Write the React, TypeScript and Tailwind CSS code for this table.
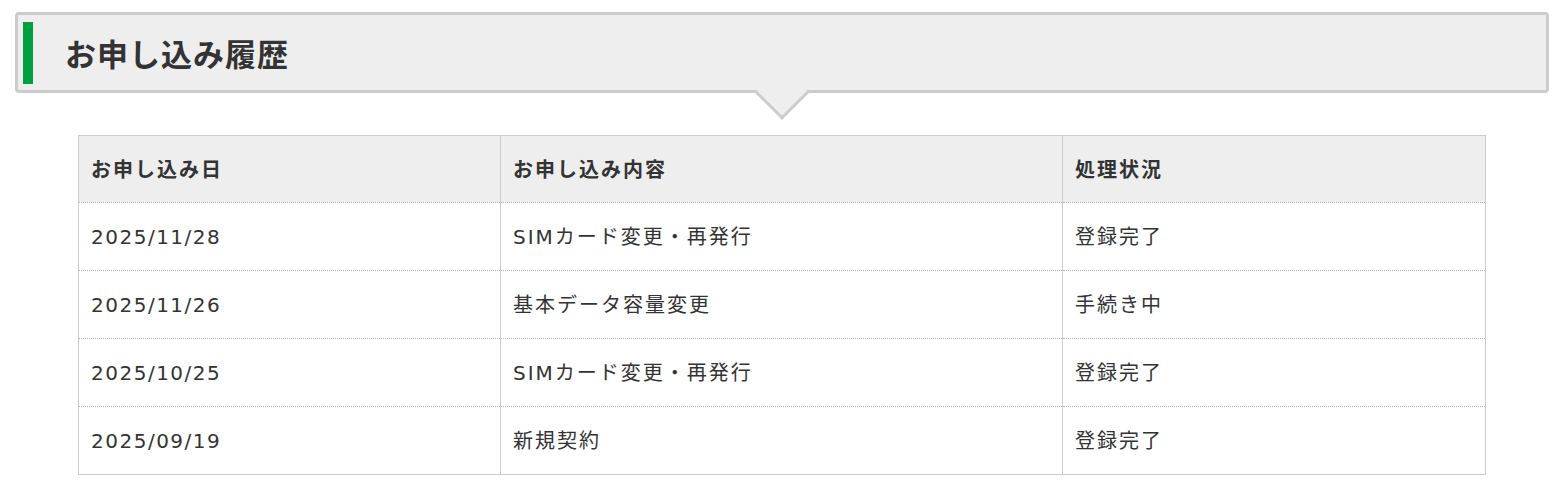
const rows = [
  { date: "2025/11/28", content: "SIMカード変更・再発行", status: "登録完了" },
  { date: "2025/11/26", content: "基本データ容量変更", status: "手続き中" },
  { date: "2025/10/25", content: "SIMカード変更・再発行", status: "登録完了" },
  { date: "2025/09/19", content: "新規契約", status: "登録完了" },
];

const jp = '"Noto Sans CJK JP", sans-serif';
const mixed = '"DejaVu Sans", "Noto Sans CJK JP", sans-serif';

export default function App() {
  return (
    <div className="w-[1566px] h-[490px] bg-white text-[#333] pt-[12px]" style={{ fontFamily: mixed }}>
      {/* heading */}
      <div className="relative ml-[15px] mr-[17px] h-[81px] rounded-[4px] border-[3px] border-[#cccccc] bg-[#eeeeee] flex items-center">
        <div className="ml-[5px] w-[10px] h-[62px] bg-[#00a040]" />
        <h2 className="ml-[32px] text-[31px] leading-none font-bold tracking-[1px]" style={{ fontFamily: jp }}>
          お申し込み履歴
        </h2>
        <div className="absolute left-1/2 -translate-x-1/2 bottom-[-22px] w-[38px] h-[38px] rotate-45 bg-[#eeeeee] border-r-[3px] border-b-[3px] border-[#cccccc]" />
      </div>

      {/* table */}
      <div className="ml-[78px] mr-[80px] mt-[42px]">
        <table className="w-full border-collapse border border-[#cccccc] text-[20px]">
          <thead>
            <tr className="h-[67px] bg-[#eeeeee]">
              <th
                className="w-[422px] text-left font-bold tracking-[2px] pl-[12px] border-r border-[#cccccc] border-b border-b-[#b5b5b5] border-dotted"
                style={{ fontFamily: jp, borderRightStyle: "solid" }}
              >
                お申し込み日
              </th>
              <th
                className="w-[562px] text-left font-bold tracking-[2px] pl-[12px] border-r border-[#cccccc] border-b border-b-[#b5b5b5] border-dotted"
                style={{ fontFamily: jp, borderRightStyle: "solid" }}
              >
                お申し込み内容
              </th>
              <th
                className="text-left font-bold tracking-[2px] pl-[12px] border-b border-b-[#b5b5b5] border-dotted"
                style={{ fontFamily: jp }}
              >
                処理状況
              </th>
            </tr>
          </thead>
          <tbody>
            {rows.map((r, i) => (
              <tr
                key={i}
                className={"h-[68px] " + (i < rows.length - 1 ? "border-b border-dotted border-[#b5b5b5]" : "")}
              >
                <td className="pl-[12px] tracking-[1.5px] border-r border-solid border-r-[#cccccc]">{r.date}</td>
                <td className="pl-[12px] tracking-[2px] border-r border-solid border-r-[#cccccc]">{r.content}</td>
                <td className="pl-[12px] tracking-[2px]">{r.status}</td>
              </tr>
            ))}
          </tbody>
        </table>
      </div>
    </div>
  );
}
